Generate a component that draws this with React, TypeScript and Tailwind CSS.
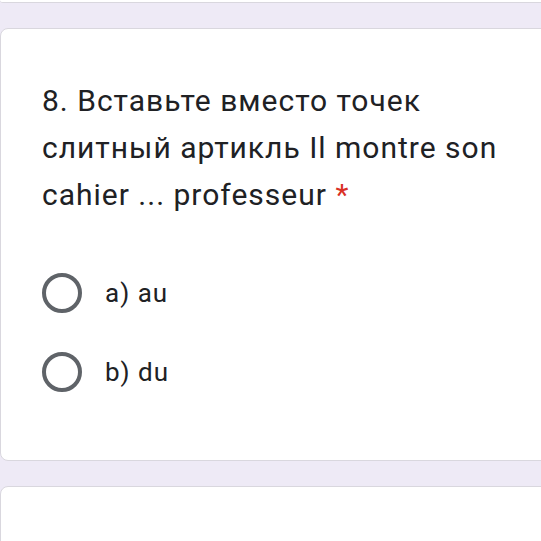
import React from "react";

const options = ["a) au", "b) du"];

const Radio: React.FC<{ label: string }> = ({ label }) => (
  <div className="flex items-center h-[40px]">
    <div className="w-[40px] h-[40px] rounded-full border-[4px] border-[#5f6368] shrink-0" />
    <span className="ml-[23px] text-[26px] leading-[40px] tracking-[1px] text-[#202124]">{label}</span>
  </div>
);

const App: React.FC = () => {
  return (
    <div
      className="w-[541px] h-[541px] overflow-hidden bg-[#eeeaf6] flex flex-col gap-[25px]"
      style={{ fontFamily: "Roboto, 'Noto Sans', sans-serif" }}
    >
      <div className="h-[3px] w-[560px] bg-white border-b border-[#d9d7de] rounded-b-lg shrink-0" />
      <div className="w-[560px] bg-white border border-[#d9d7de] rounded-lg pt-[48px] pb-[68px] pl-[41px] shrink-0">
        <p className="w-[480px] text-[30px] leading-[47px] tracking-[1px] text-[#202124]">
          8. Вставьте вместо точек слитный артикль Il montre son cahier ... professeur{" "}
          <span className="text-[#d93025]">*</span>
        </p>
        <div className="mt-[55px] flex flex-col gap-[39px]">
          {options.map((o) => (
            <Radio key={o} label={o} />
          ))}
        </div>
      </div>
      <div className="h-[100px] w-[560px] bg-white border border-[#d9d7de] rounded-lg shrink-0" />
    </div>
  );
};

export default App;
